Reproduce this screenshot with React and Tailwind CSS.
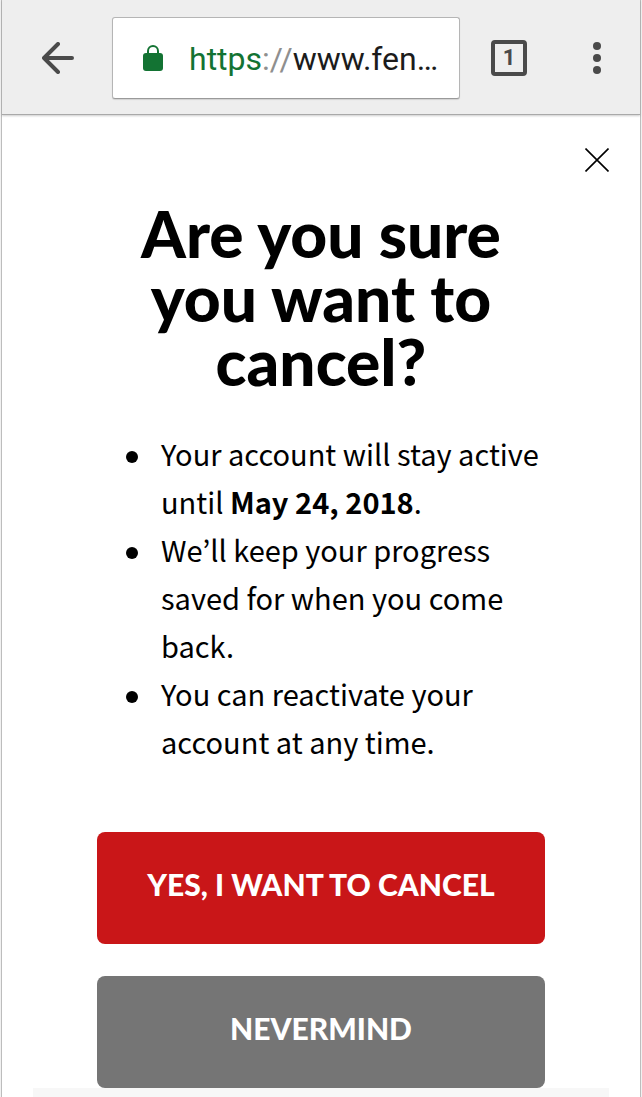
import React from "react";

function BrowserBar() {
  return (
    <header className="flex items-center border-b border-[#a9a9a9] bg-[#eeeeee] pt-[17px] pb-[15px] pl-10 pr-[39px] shadow-[0_1px_2px_rgba(0,0,0,0.2)]">
      <button type="button" aria-label="Back" className="shrink-0">
        <svg width="32" height="32" viewBox="0 0 32 32" fill="none" stroke="#4a4a4a" strokeWidth="4" strokeLinecap="round" strokeLinejoin="round" className="block">
          <path d="M16 2 2 16 16 30M2 16H30" />
        </svg>
      </button>
      <button
        type="button"
        className="ml-[38px] flex h-[82px] min-w-0 flex-1 items-center rounded-[3px] border border-[#b5b5b5] border-b-[#9a9a9a] bg-white pl-[30px] pr-5 shadow-[0_1px_1px_rgba(0,0,0,0.12)]"
      >
        <svg width="20" height="26" viewBox="0 0 20 26" className="block shrink-0">
          <rect x="0" y="8" width="20" height="18" rx="3" fill="#137333" />
          <path d="M5 9V6a5 5 0 0 1 10 0v3" fill="none" stroke="#137333" strokeWidth="2" />
        </svg>
        <span className="ml-[26px] whitespace-nowrap pt-0.5 text-[32px] leading-10 text-[#1c1c1c]">
          <span className="text-[#137333]">https</span>
          <span className="text-[#8f8f8f]">://</span>www.fen…
        </span>
      </button>
      <button
        type="button"
        aria-label="1 open tab"
        className="ml-[31px] flex size-9 shrink-0 items-center justify-center rounded-[4px] border-4 border-[#4a4a4a] text-[22px] font-bold leading-7 text-[#4a4a4a]"
      >
        1
      </button>
      <button type="button" aria-label="Menu" className="ml-[66px] shrink-0">
        <svg width="8" height="32" viewBox="0 0 8 32" fill="#4a4a4a" className="block">
          <circle cx="4" cy="4" r="4" />
          <circle cx="4" cy="16" r="4" />
          <circle cx="4" cy="28" r="4" />
        </svg>
      </button>
    </header>
  );
}

function Item({ children }) {
  return <li className="relative before:absolute before:-left-[35px] before:top-[22px] before:size-3 before:rounded-full before:bg-black">{children}</li>;
}

export default function App() {
  return (
    <div className="flex min-h-screen flex-col bg-[#f1f1f1] px-px font-['Roboto',sans-serif]">
      <div className="flex flex-1 flex-col border-x border-[#bdbdbd] bg-white">
        <BrowserBar />
        <main className="flex flex-1 flex-col px-[31px] pt-[33px] text-black">
          <button type="button" aria-label="Close" className="self-end">
            <svg width="24" height="24" viewBox="0 0 24 24" fill="none" stroke="#000" strokeWidth="1.6" className="block">
              <path d="M.5.5l23 23M23.5.5l-23 23" />
            </svg>
          </button>
          <section className="flex flex-col px-16 pt-[30px]">
            <h1 className="px-8 text-center font-['Lato_Black','Lato',sans-serif] text-[64px] font-black leading-[64px]">
              Are you sure you want to cancel?
            </h1>
            <ul className="mt-[35px] pl-16 font-['Noto_Sans_CJK_KR',sans-serif] text-[29px] leading-[48px]">
              <Item>
                Your account will stay active until <strong>May 24, 2018</strong>.
              </Item>
              <Item>We’ll keep your progress saved for when you come back.</Item>
              <Item>You can reactivate your account at any time.</Item>
            </ul>
            <div className="mt-[67px] flex flex-col gap-8 font-['Lato_Black','Lato',sans-serif] text-[30px] font-black leading-8 text-white">
              <button type="button" className="rounded-lg bg-[#c91618] px-8 pt-9 pb-11">
                YES, I WANT TO CANCEL
              </button>
              <button type="button" className="rounded-lg bg-[#757575] px-8 pt-9 pb-11">
                NEVERMIND
              </button>
            </div>
          </section>
          <div className="min-h-[9px] flex-1 bg-[#f7f7f7]" />
        </main>
      </div>
    </div>
  );
}
